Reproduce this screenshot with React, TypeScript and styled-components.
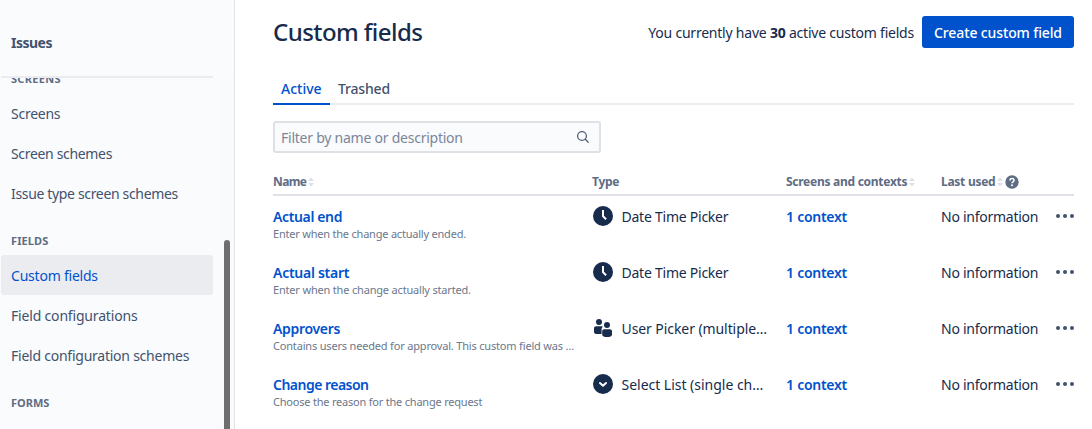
import React from 'react';
import styled, { createGlobalStyle } from 'styled-components';

const GlobalStyle = createGlobalStyle`
  * { box-sizing: border-box; }
  body {
    margin: 0;
    background: #fff;
    color: #172b4d;
    font-family: "Noto Sans", "Open Sans", sans-serif;
    font-size: 14px;
    line-height: 20px;
    overflow: hidden;
  }
`;

const Page = styled.div`
  display: flex;
  height: 429px;
  overflow: hidden;
`;

/* Sidebar */
const Sidebar = styled.nav`
  display: flex;
  flex-direction: column;
  flex: none;
  width: 235px;
  background: #fafbfc;
  border-right: 1px solid #e1e3e7;
`;

const SidebarHeader = styled.div`
  flex: none;
  width: 212px;
  height: 78px;
  margin-left: 1px;
  padding: 33px 10px 0;
  border-bottom: 2px solid #ebecf0;
  color: #42526e;
  font-weight: 700;
  letter-spacing: -0.5px;
`;

const ScrollArea = styled.div`
  display: flex;
  flex: 1;
  min-height: 0;
  overflow: hidden;
`;

const Menu = styled.div`
  width: 212px;
  margin: -7px 0 0 1px;
`;

const GroupTitle = styled.h3<{ $track?: number }>`
  margin: 0;
  padding: 0 10px;
  height: 16px;
  color: #5e6c84;
  font-size: 11px;
  font-weight: 700;
  line-height: 16px;
  letter-spacing: ${(p) => p.$track ?? 0}px;
`;

const Group = styled.section`
  padding-bottom: 20px;
`;

const GroupItems = styled.div`
  padding-top: 6px;
`;

const MenuItem = styled.a<{ $active?: boolean; $track: number }>`
  display: flex;
  align-items: center;
  height: 40px;
  padding: 1px 10px 0;
  border-radius: 3px;
  background: ${(p) => (p.$active ? '#ebecf0' : 'transparent')};
  color: ${(p) => (p.$active ? '#0052cc' : '#42526e')};
  letter-spacing: ${(p) => p.$track}px;
  white-space: nowrap;
`;

const ScrollTrack = styled.div`
  width: 14px;
  margin-left: 7px;
  padding: 162px 4px 0;
  background: #f9fafb;
`;

const ScrollThumb = styled.div`
  width: 6px;
  height: 220px;
  border-radius: 3px;
  background: #6e6e6e;
`;

/* Main area */
const Main = styled.main`
  flex: 1;
  padding: 16px 18px 0 38px;
`;

const PageHeader = styled.header`
  display: flex;
  align-items: center;
  height: 32px;
`;

const Title = styled.h1`
  flex: 1;
  margin: 0;
  font-size: 24px;
  font-weight: 500;
  line-height: 28px;
  letter-spacing: -0.56px;
`;

const Usage = styled.span`
  margin-right: 8px;
  padding-top: 2px;
  letter-spacing: -0.22px;
  white-space: pre;
`;

const CreateButton = styled.button`
  width: 152px;
  height: 32px;
  padding: 1px 0 0;
  border: 0;
  border-radius: 3px;
  background: #0052cc;
  color: #fff;
  font: inherit;
  font-weight: 500;
  letter-spacing: -0.12px;
`;

const Tabs = styled.div`
  display: flex;
  margin-top: 25px;
  height: 32px;
  box-shadow: inset 0 -2px #ebecf0;
`;

const Tab = styled.button<{ $active?: boolean }>`
  width: ${(p) => (p.$active ? 57 : 68)}px;
  padding: 2px 0 0 8px;
  border: 0;
  border-bottom: 2px solid ${(p) => (p.$active ? '#0052cc' : 'transparent')};
  background: none;
  color: ${(p) => (p.$active ? '#0052cc' : '#42526e')};
  font: inherit;
  font-weight: 500;
  letter-spacing: ${(p) => (p.$active ? 0 : -0.16)}px;
  text-align: left;
`;

const SearchBox = styled.div`
  display: flex;
  align-items: center;
  justify-content: space-between;
  width: 328px;
  height: 32px;
  margin-top: 16px;
  padding: 0 9px 0 6px;
  border: 2px solid #dfe1e6;
  border-radius: 3px;
  background: #fafbfc;
  color: #7a869a;
  letter-spacing: -0.24px;
`;

const Placeholder = styled.span`
  padding-top: 2px;
`;

const Columns = styled.div`
  display: grid;
  grid-template-columns: 319px 194px 155px 133px;
`;

const TableHead = styled(Columns)`
  height: 43px;
  padding-top: 19px;
  border-bottom: 2px solid #dfe1e6;
  color: #5e6c84;
  font-size: 12px;
  font-weight: 700;
`;

const HeadCell = styled.div<{ $track?: number }>`
  display: flex;
  align-items: center;
  height: 20px;
  letter-spacing: ${(p) => p.$track ?? -0.27}px;
  white-space: nowrap;
`;

const Row = styled(Columns)`
  height: 56px;
  padding-top: 11px;
`;

const FieldLink = styled.a<{ $track: number }>`
  display: block;
  color: #0052cc;
  font-weight: 600;
  letter-spacing: ${(p) => p.$track}px;
`;

const Description = styled.div<{ $track: number }>`
  margin-top: -1px;
  color: #6b778c;
  font-size: 11px;
  line-height: 16px;
  letter-spacing: ${(p) => p.$track}px;
  white-space: nowrap;
`;

const TypeCell = styled.div<{ $track: number }>`
  display: flex;
  height: 20px;
  gap: 5.5px;
  letter-spacing: ${(p) => p.$track}px;
  white-space: nowrap;
`;

const LastCell = styled.div`
  display: flex;
  align-items: center;
  justify-content: space-between;
  height: 20px;
  letter-spacing: -0.26px;
`;

const Glyph = styled.svg`
  display: block;
  flex: none;
  margin-top: -3px;
`;

const Inline = styled.svg<{ $gap?: number; $lift?: number }>`
  display: block;
  flex: none;
  margin-left: ${(p) => p.$gap ?? 0}px;
  margin-bottom: ${(p) => p.$lift ?? 0}px;
`;

const SortIcon = ({ gap = 2 }: { gap?: number }) => (
  <Inline $gap={gap} width="6" height="8" viewBox="0 0 6 8" fill="#dfe1e6">
    <path d="M2.4 0h1.2L6 3H0zM2.4 8h1.2L6 5H0z" />
  </Inline>
);

const HelpIcon = () => (
  <Inline $gap={2} $lift={1} width="14" height="14" viewBox="0 0 14 14">
    <circle cx="7" cy="7" r="6.7" fill="#5e6c84" />
    <path d="M5 5.6C5 4.3 5.8 3.6 7 3.6s2 .7 2 1.8c0 1.3-2 1.5-2 2.9" fill="none" stroke="#fff" strokeWidth="1.5" />
    <circle cx="7" cy="10.3" r="1" fill="#fff" />
  </Inline>
);

const SearchIcon = () => (
  <Inline width="14" height="14" viewBox="0 0 14 14" fill="none" stroke="#505f79" strokeWidth="1.3" strokeLinecap="round">
    <circle cx="6" cy="6" r="4.4" />
    <path d="m9.3 9.3 2.9 2.9" />
  </Inline>
);

const MoreIcon = () => (
  <Inline $lift={2} width="18" height="4" viewBox="0 0 18 4" fill="#42526e">
    <circle cx="2" cy="2" r="2" />
    <circle cx="9" cy="2" r="2" />
    <circle cx="16" cy="2" r="2" />
  </Inline>
);

type Kind = 'clock' | 'people' | 'select';

const TypeIcon = ({ kind }: { kind: Kind }) => (
  <Glyph width="24" height="24" viewBox="0 0 24 24" fill="#172b4d">
    {kind === 'people' ? (
      <>
        <circle cx="7" cy="6" r="3" />
        <path d="M2 12.3c0-1.4.9-2.1 2.2-2.1h5.4c.6 0 1 .2 1.4.6-.9.6-1.4 1.5-1.4 2.6V18H4.2C2.8 17.7 2 17.2 2 16z" />
        <circle cx="15" cy="9" r="3" />
        <path d="M10.2 15.2c0-1.3.8-2 2-2h5.6c1.3 0 2.2.8 2.2 2.1v3.4c0 1.6-2.2 2.3-4.9 2.3s-4.9-.7-4.9-2.3z" />
      </>
    ) : (
      <>
        <circle cx="11" cy="12" r="10" />
        {kind === 'clock' ? (
          <path d="M11 6v6.2l3.1 3.1" fill="none" stroke="#fff" strokeWidth="2" />
        ) : (
          <path d="m8 11 3 2.7 3-2.7" fill="none" stroke="#fff" strokeWidth="2" strokeLinecap="round" strokeLinejoin="round" />
        )}
      </>
    )}
  </Glyph>
);

interface Field {
  name: string;
  nameTrack: number;
  description: string;
  descTrack: number;
  kind: Kind;
  type: string;
  typeTrack: number;
}

const fields: Field[] = [
  { name: 'Actual end', nameTrack: -0.37, description: 'Enter when the change actually ended.', descTrack: -0.21, kind: 'clock', type: 'Date Time Picker', typeTrack: -0.24 },
  { name: 'Actual start', nameTrack: -0.27, description: 'Enter when the change actually started.', descTrack: -0.18, kind: 'clock', type: 'Date Time Picker', typeTrack: -0.24 },
  { name: 'Approvers', nameTrack: -0.32, description: 'Contains users needed for approval. This custom field was …', descTrack: -0.18, kind: 'people', type: 'User Picker (multiple…', typeTrack: -0.08 },
  { name: 'Change reason', nameTrack: -0.52, description: 'Choose the reason for the change request', descTrack: -0.21, kind: 'select', type: 'Select List (single ch…', typeTrack: -0.02 },
];

export default function App() {
  return (
    <>
      <GlobalStyle />
      <Page>
        <Sidebar>
          <SidebarHeader>Issues</SidebarHeader>
          <ScrollArea>
            <Menu>
              <Group>
                <GroupTitle $track={0.3}>SCREENS</GroupTitle>
                <GroupItems>
                  <MenuItem $track={-0.25}>Screens</MenuItem>
                  <MenuItem $track={-0.33}>Screen schemes</MenuItem>
                  <MenuItem $track={-0.34}>Issue type screen schemes</MenuItem>
                </GroupItems>
              </Group>
              <Group>
                <GroupTitle $track={0.1}>FIELDS</GroupTitle>
                <GroupItems>
                  <MenuItem $active $track={-0.22}>Custom fields</MenuItem>
                  <MenuItem $track={-0.18}>Field configurations</MenuItem>
                  <MenuItem $track={-0.24}>Field configuration schemes</MenuItem>
                </GroupItems>
              </Group>
              <Group>
                <GroupTitle>FORMS</GroupTitle>
              </Group>
            </Menu>
            <ScrollTrack>
              <ScrollThumb />
            </ScrollTrack>
          </ScrollArea>
        </Sidebar>
        <Main>
          <PageHeader>
            <Title>Custom fields</Title>
            <Usage>You currently have <b>30</b> active custom fields</Usage>
            <CreateButton>Create custom field</CreateButton>
          </PageHeader>
          <Tabs>
            <Tab $active>Active</Tab>
            <Tab>Trashed</Tab>
          </Tabs>
          <SearchBox>
            <Placeholder>Filter by name or description</Placeholder>
            <SearchIcon />
          </SearchBox>
          <TableHead>
            <HeadCell $track={-0.6}>Name<SortIcon /></HeadCell>
            <HeadCell>Type</HeadCell>
            <HeadCell>Screens and contexts<SortIcon /></HeadCell>
            <HeadCell>Last used<SortIcon /><HelpIcon /></HeadCell>
          </TableHead>
          {fields.map((f) => (
            <Row key={f.name}>
              <div>
                <FieldLink $track={f.nameTrack}>{f.name}</FieldLink>
                <Description $track={f.descTrack}>{f.description}</Description>
              </div>
              <TypeCell $track={f.typeTrack}>
                <TypeIcon kind={f.kind} />
                {f.type}
              </TypeCell>
              <FieldLink $track={-0.26}>1 context</FieldLink>
              <LastCell>
                No information
                <MoreIcon />
              </LastCell>
            </Row>
          ))}
        </Main>
      </Page>
    </>
  );
}
